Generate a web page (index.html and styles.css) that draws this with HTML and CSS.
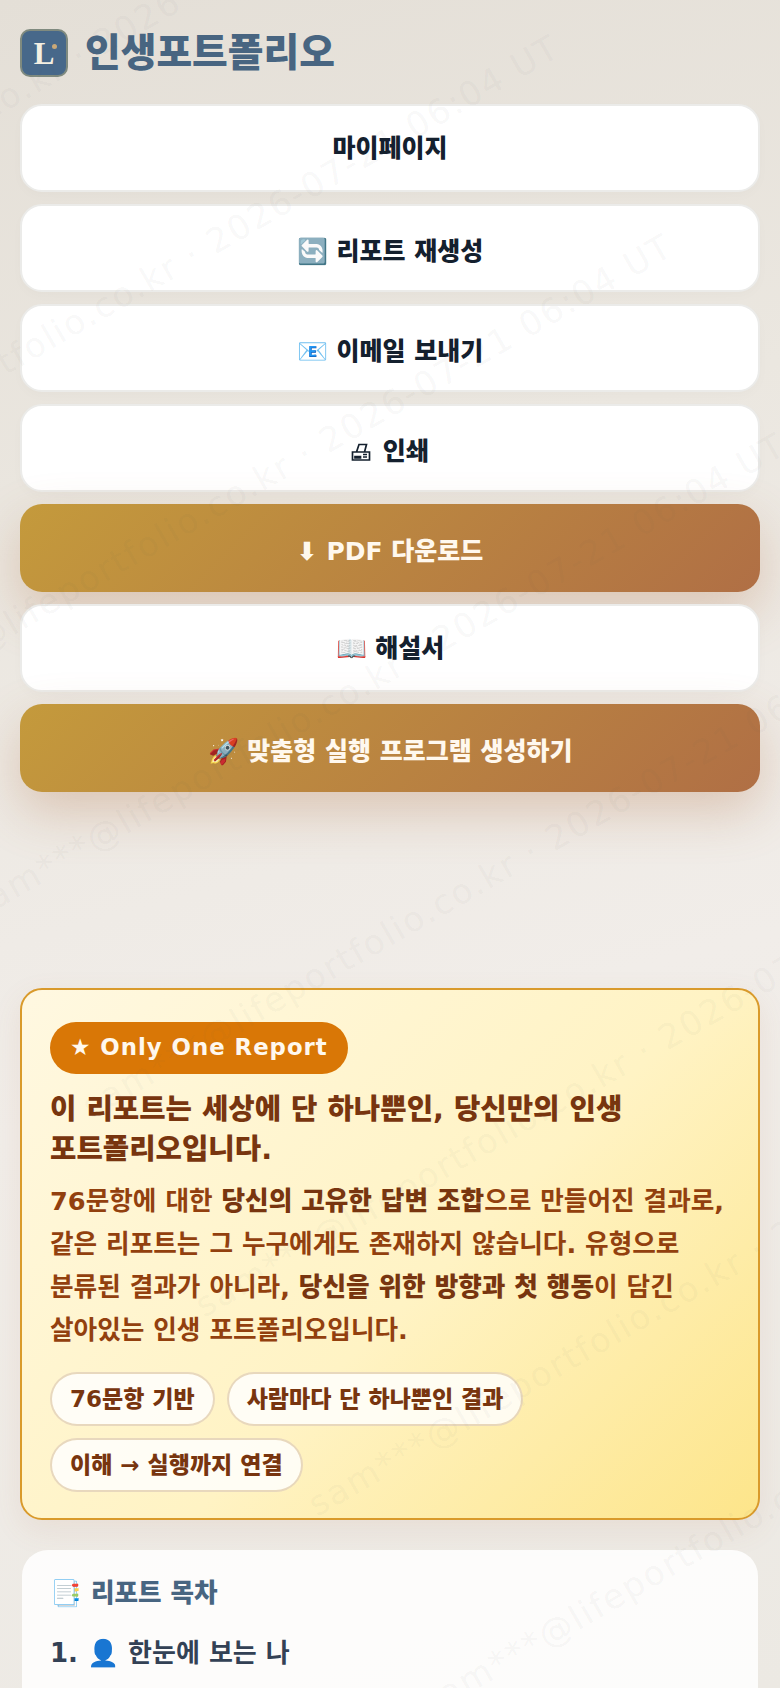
FILE: index.html
```html
<!DOCTYPE html>
<html lang="ko">
<head>
<meta charset="utf-8">
<title>인생포트폴리오</title>
<link rel="stylesheet" href="styles.css">
</head>
<body>
<div class="page">
  <header class="brand">
    <div class="logo"><span class="logo-l">L</span><span class="logo-dot"></span></div>
    <h1 class="brand-name">인생포트폴리오</h1>
  </header>
  <nav class="actions">
    <button class="btn btn-plain">마이페이지</button>
    <button class="btn">🔄 리포트 재생성</button>
    <button class="btn">📧 이메일 보내기</button>
    <button class="btn"><svg class="printer" viewBox="0 0 20 20" aria-hidden="true"><path d="M5.500 10 8 2.500h7.500L13.500 10M1.500 10h17v8h-17zM4 14.500h5.500v1.500H4zM12 12.500h4M12 15h4" fill="none" stroke="#14202e" stroke-width="1.700"/></svg> 인쇄</button>
    <button class="btn btn-gold">⬇ PDF 다운로드</button>
    <button class="btn btn-plain">📖 해설서</button>
    <button class="btn btn-gold">🚀 맞춤형 실행 프로그램 생성하기</button>
  </nav>
  <section class="only">
    <span class="badge">★ Only One Report</span>
    <h2 class="only-title">이 리포트는 세상에 단 하나뿐인, 당신만의 인생 포트폴리오입니다.</h2>
    <p class="only-text">76문항에 대한 <strong>당신의 고유한 답변 조합</strong>으로 만들어진 결과로,<br>같은 리포트는 그 누구에게도 존재하지 않습니다. 유형으로<br>분류된 결과가 아니라, <strong>당신을 위한 방향과 첫 행동</strong>이 담긴<br>살아있는 인생 포트폴리오입니다.</p>
    <div class="chips">
      <span class="chip">76문항 기반</span>
      <span class="chip">사람마다 단 하나뿐인 결과</span>
      <span class="chip">이해 → 실행까지 연결</span>
    </div>
  </section>
  <section class="toc">
    <h3 class="toc-title">📑 리포트 목차</h3>
    <div class="toc-item"><b>1.</b> 👤 한눈에 보는 나</div>
  </section>
</div>
<svg class="watermark" width="780" height="1688" viewBox="0 0 780 1688" aria-hidden="true">
  <text x="-361" y="323" transform="rotate(-30 -361 323)">sam***@lifeportfolio.co.kr · 2026-07-21 06:04 UT</text>
  <text x="-248" y="522" transform="rotate(-30 -248 522)">sam***@lifeportfolio.co.kr · 2026-07-21 06:04 UT</text>
  <text x="-135" y="721" transform="rotate(-30 -135 721)">sam***@lifeportfolio.co.kr · 2026-07-21 06:04 UT</text>
  <text x="-22" y="920" transform="rotate(-30 -22 920)">sam***@lifeportfolio.co.kr · 2026-07-21 06:04 UT</text>
  <text x="91" y="1119" transform="rotate(-30 91 1119)">sam***@lifeportfolio.co.kr · 2026-07-21 06:04 UT</text>
  <text x="204" y="1318" transform="rotate(-30 204 1318)">sam***@lifeportfolio.co.kr · 2026-07-21 06:04 UT</text>
  <text x="317" y="1517" transform="rotate(-30 317 1517)">sam***@lifeportfolio.co.kr · 2026-07-21 06:04 UT</text>
  <text x="430" y="1716" transform="rotate(-30 430 1716)">sam***@lifeportfolio.co.kr · 2026-07-21 06:04 UT</text>
</svg>
</body>
</html>
```
FILE: styles.css
```css
* { box-sizing: border-box; }
html, body { margin: 0; padding: 0; }
body {
  width: 780px;
  height: 1688px;
  overflow: hidden;
  position: relative;
  font-family: "DejaVu Sans", "Noto Sans CJK KR", sans-serif;
  background: linear-gradient(165deg, #e4dfd7 0%, #ebe7e0 30%, #f1ede9 60%, #ece9e3 100%);
}
.page { padding: 29px 20px 0; }
.brand { display: flex; align-items: center; gap: 17px; height: 48px; margin-bottom: 27px; }
.logo {
  position: relative;
  width: 48px; height: 48px;
  border-radius: 10px;
  background: #47688a;
  border: 2.500px solid #7f8a7f;
  display: flex; align-items: center; justify-content: center;
}
.logo-l { font-family: "Liberation Serif", serif; font-weight: 700; font-size: 31px; color: #f4efe2; line-height: 1; }
.logo-dot { position: absolute; top: 13px; right: 9px; width: 5px; height: 5px; border-radius: 50%; background: #c9a878; }
.brand-name { margin: 0; font-size: 38.800px; font-weight: 900; color: #486581; line-height: 48px; }
.actions { display: flex; flex-direction: column; gap: 12px; }
.btn {
  width: 100%;
  height: 88px;
  border-radius: 22px;
  border: 2px solid #ebebe9;
  background: #fff;
  color: #14202e;
  font-family: inherit;
  font-size: 25px;
  font-weight: 800;
  padding: 2px 0 0;
  box-shadow: 0 4px 12px rgba(0, 0, 0, .02);
}
.btn-plain { padding: 0 0 4px; }
.printer { width: 20px; height: 20px; vertical-align: -2px; margin-right: 3px; }
.btn-gold {
  border: 0;
  color: #fff8ee;
  background: linear-gradient(135deg, #c49a3c 0%, #b06f45 100%);
  box-shadow: 0 20px 50px rgba(176, 111, 69, .3);
}
.only {
  margin-top: 196px;
  height: 532px;
  padding: 32px 28px 0;
  border: 2px solid #d99a2b;
  border-radius: 22px;
  background: linear-gradient(135deg, #fff8e1 0%, #fff3c4 55%, #fde58a 100%);
  box-shadow: 0 10px 30px rgba(176, 111, 69, .1);
}
.badge {
  display: inline-block;
  height: 52px;
  line-height: 50px;
  padding: 0 20px;
  border-radius: 26px;
  background: #d97706;
  color: #fff8ee;
  font-size: 22.800px;
  font-weight: 700;
  letter-spacing: 1px;
}
.only-title { margin: 15px 0 0; font-size: 28.700px; line-height: 40px; font-weight: 800; color: #78350f; word-break: keep-all; }
.only-text { margin: 11px 0 0; font-size: 25.650px; line-height: 43px; color: #92400e; font-weight: 600; white-space: nowrap; }
.only-text strong { color: #78350f; font-weight: 800; }
.chips { display: flex; flex-wrap: wrap; gap: 12px; margin-top: 20px; }
.chip {
  height: 54px;
  line-height: 50px;
  padding: 0 18px;
  border-radius: 27px;
  border: 2px solid rgba(180, 130, 60, .3);
  background: rgba(255, 255, 255, .82);
  color: #78350f;
  font-size: 23px;
  font-weight: 800;
}
.toc {
  margin: 30px 2px 0;
  height: 300px;
  padding: 27px 28px 0;
  border-radius: 26px;
  background: rgba(255, 255, 255, .85);
}
.toc-title { margin: 0; font-size: 25.600px; line-height: 32px; font-weight: 800; color: #486581; }
.toc-item { margin-top: 26px; font-size: 26px; line-height: 36px; color: #334155; font-weight: 600; }
.toc-item b { font-weight: 800; }
.watermark { position: absolute; left: 0; top: 0; pointer-events: none; }
.watermark text { font-family: "DejaVu Sans", sans-serif; font-size: 34px; letter-spacing: 2px; fill: rgba(90, 90, 90, .055); }
```
